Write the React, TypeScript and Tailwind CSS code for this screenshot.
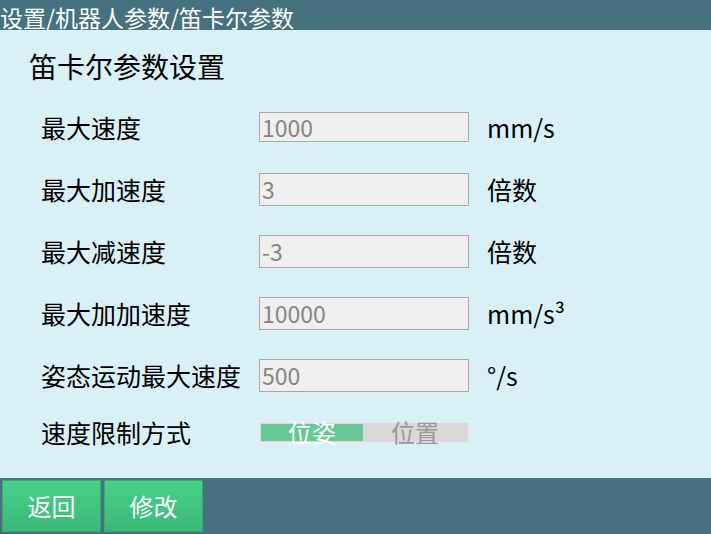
import React from "react";

const font = { fontFamily: '"Noto Sans CJK SC", "Noto Sans", sans-serif' };

const rows = [
  { label: "最大速度", value: "1000", unit: "mm/s", h: "h-[30px]" },
  { label: "最大加速度", value: "3", unit: "倍数", h: "h-[33px]" },
  { label: "最大减速度", value: "-3", unit: "倍数", h: "h-[33px]" },
  { label: "最大加加速度", value: "10000", unit: "mm/s³", h: "h-[33px]" },
  { label: "姿态运动最大速度", value: "500", unit: "°/s", h: "h-[33px]" },
];

export default function App() {
  return (
    <div
      className="w-[711px] h-[534px] flex flex-col bg-[#d9f0f7] overflow-hidden"
      style={font}
    >
      <header className="h-[30px] pt-[4px] bg-[#46717f] text-white text-[23px] leading-[26px] whitespace-nowrap">
        设置/机器人参数/笛卡尔参数
      </header>

      <main className="flex-1 flex flex-col">
        <div className="h-[66px] pl-[29px] pt-[18px] text-[28px] leading-[36px] text-black">
          笛卡尔参数设置
        </div>

        {rows.map((r) => (
          <div key={r.label} className="h-[62px] flex items-center">
            <div className="w-[259px] pl-[41px] text-[25px] leading-[30px] text-black whitespace-nowrap">
              {r.label}
            </div>
            <div
              className={`w-[210px] ${r.h} bg-[#efefef] border border-[#a9a9a9] flex items-center px-[2px] text-[23px] text-[#858585]`}
            >
              {r.value}
            </div>
            <div className="pl-[18px] text-[25px] leading-[30px] text-black">
              {r.unit}
            </div>
          </div>
        ))}

        <div className="h-[56px] flex items-center -mt-[2px]">
          <div className="w-[259px] pl-[41px] text-[25px] leading-[30px] text-black whitespace-nowrap">
            速度限制方式
          </div>
          <div className="w-[210px] h-[21px] border border-[#eaeaea] flex p-[1px] bg-[#d9d9d9]">
            <div className="w-[102px] bg-[#68c898] text-white text-[24px] leading-[16px] text-center">
              位姿
            </div>
            <div className="flex-1 bg-[#d9d9d9] text-[#999999] text-[24px] leading-[16px] text-center">
              位置
            </div>
          </div>
        </div>
      </main>

      <footer className="h-[56px] bg-[#46717f] flex gap-[3px] p-[2px]">
        <button className="w-[99px] h-[52px] bg-gradient-to-b from-[#47d189] to-[#3cb879] border border-[#3aa873] text-white text-[24px]">
          返回
        </button>
        <button className="w-[99px] h-[52px] bg-gradient-to-b from-[#47d189] to-[#3cb879] border border-[#3aa873] text-white text-[24px]">
          修改
        </button>
      </footer>
    </div>
  );
}
